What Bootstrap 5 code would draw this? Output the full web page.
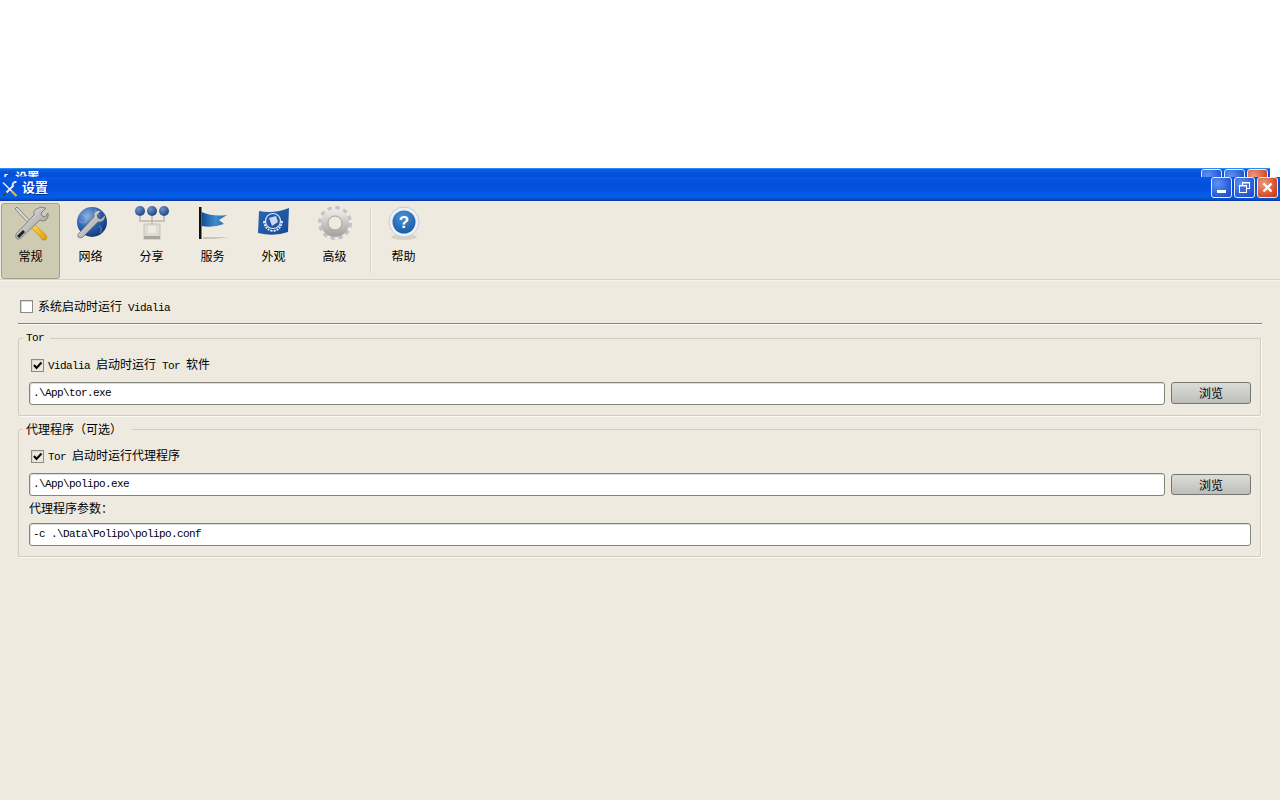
<!DOCTYPE html>
<html lang="zh-CN">
  <head>
    <meta charset="UTF-8" />
    <meta name="viewport" content="width=device-width, initial-scale=1" />
    <title>设置</title>
    <link href="https://cdn.jsdelivr.net/npm/bootstrap@5.3.3/dist/css/bootstrap.min.css" rel="stylesheet" />
    <style>
      html, body { height: 100%; overflow: hidden; }
      body {
        background: #fff;
        font-family: "Liberation Mono", "Noto Sans CJK SC", monospace;
        font-size: 10px;
        line-height: 14px;
        color: #000;
      }
      /* latin text in the shot is a 6px-per-char bitmap font */
      .lat { font-family: "Liberation Mono", monospace; font-size: 11px; letter-spacing: -.6px; }
      .cjk { font-family: "Noto Sans CJK SC", sans-serif; font-size: 12px; }
      .top-blank { height: 168px; }
      .title-back {
        height: 9px; width: 1270px; overflow: hidden; color: #fff; padding: 3px 0 0 2px;
        background: linear-gradient(#0f63e6, #0451dc 50%, #0350e0);
        border-top: 1px solid #2c8bf0;
      }
      .title-back .wbtns { margin-top: -3px; padding-right: 2px; }
      .title-back b { font-weight: 700; font-size: 12px; line-height: 14px; }
      .title-main {
        height: 24px; color: #fff; padding: 0 2px;
        background: linear-gradient(#0a58de 0, #0557e6 2px, #0450da 6px, #0351de 50%, #045eea 80%, #0a50c8 92%, #03359f 100%);
      }
      .title-main .ttl { font-size: 13px; font-weight: 700; margin-left: 4px; padding-bottom: 4px; text-shadow: 1px 1px 0 #0a2f9a; }
      .wbtn {
        width: 21px; height: 21px; border: 1px solid #e4ecfa; border-radius: 3px;
        background: radial-gradient(circle at 30% 30%, #5f92f2, #2c5fd8 60%, #1d46c0);
        margin-left: 2px;
      }
      .wbtn.wclose { background: radial-gradient(circle at 30% 30%, #ec9a80, #d8552f 60%, #bb3a1b); }
      .win-body { background: #eeeadf; height: 599px; }
      .tool-strip { height: 79px; border-bottom: 1px solid #d6d2c4; padding: 2px 0 0 1px; box-shadow: 0 1px 0 #f6f4ec; }
      .tool-item { width: 61px; height: 76px; text-align: center; padding-top: 3px; }
      .tool-item svg { display: block; margin: 0 auto; }
      .tool-item .tlabel { display: block; margin-top: 7px; line-height: 14px; }
      .tool-item.on { background: #cfcbb2; border: 1px solid #a5a18c; border-radius: 3px; width: 59px; padding-top: 2px; }
      .tool-sep { width: 1px; height: 66px; background: #d6d2c4; margin: 4px 2px 0 5px; box-shadow: 1px 0 0 #f8f6ee; }
      .pane { padding: 0 18px; }
      .start-row { height: 43px; padding: 20px 0 0 2px; }
      .start-row > span { margin-top: -1px; }
      .rule-line { height: 2px; border-top: 1px solid #85837a; border-bottom: 1px solid #fbfaf4; }
      .cb-box {
        width: 13px; height: 13px; background: #fff; border: 1px solid #8b8b84; flex: none;
        box-shadow: inset 1px 1px 0 #dcdad0; margin-right: 5px;
      }
      .cb-box.done { background: #ebe8dd; margin: 0 4px 0 2px; }
      .cb-box svg { display: block; }
      .grp { border: 1px solid #d0ccbf; border-radius: 2px; position: relative; margin-right: 1px; padding: 0 9px 0 10px; box-shadow: 1px 1px 0 #fbfaf4; }
      .grp-title { position: absolute; left: 4px; top: -8px; background: #eeeadf; padding: 0 6px 0 3px; line-height: 14px; }
      .grp-tor { margin-top: 13px; height: 78px; }
      .grp-proxy { margin-top: 13px; height: 128px; }
      .grp-proxy .grp-title { padding-right: 10px; }
      .cb-row { height: 18px; margin-top: 17px; }
      .path-field {
        height: 23px; background: #fff; border: 1px solid #85847c; border-radius: 3px;
        padding: 0 3px; line-height: 21px; box-shadow: inset 1px 1px 0 #ddd;
        flex: 1 1 auto;
      }
      .file-row { margin-top: 8px; gap: 6px; }
      .btn-browse {
        width: 80px; height: 22px; flex: none; padding: 0; border: 1px solid #77766e; border-radius: 3px;
        background: linear-gradient(#dcdcd8, #bdbdbb); color: #000; line-height: 18px;
      }
      .grp-proxy .btn-browse { margin-top: 1px; height: 21px; }
      .arg-label { margin-top: 5px; height: 22px; line-height: 14px; }
    </style>
  </head>
  <body>
    <svg width="0" height="0" class="d-block">
      <defs>
        <linearGradient id="gMetal" x1="0" y1="0" x2="1" y2="1"><stop offset="0" stop-color="#f4f4f4"/><stop offset="1" stop-color="#8a8a8a"/></linearGradient>
        <linearGradient id="gYellow" x1="0" y1="0" x2="1" y2="1"><stop offset="0" stop-color="#ffdc50"/><stop offset="1" stop-color="#d99a06"/></linearGradient>
        <radialGradient id="gGlobe" cx=".35" cy=".3" r=".8"><stop offset="0" stop-color="#8ab0e2"/><stop offset=".5" stop-color="#2f64b0"/><stop offset="1" stop-color="#102f6c"/></radialGradient>
        <radialGradient id="gBall" cx=".35" cy=".3" r=".8"><stop offset="0" stop-color="#6d92c8"/><stop offset="1" stop-color="#1a3f7f"/></radialGradient>
        <linearGradient id="gFlag" x1="0" y1="0" x2="1" y2="0"><stop offset="0" stop-color="#0f4d93"/><stop offset=".55" stop-color="#3f8ccd"/><stop offset="1" stop-color="#1c69ae"/></linearGradient>
        <linearGradient id="gUn" x1="0" y1="0" x2="1" y2="1"><stop offset="0" stop-color="#2a66b8"/><stop offset="1" stop-color="#174a93"/></linearGradient>
        <linearGradient id="gGear" x1="0" y1="0" x2="0" y2="1"><stop offset="0" stop-color="#e6e6e6"/><stop offset="1" stop-color="#a8a8a8"/></linearGradient>
        <radialGradient id="gHelp" cx=".45" cy=".3" r=".8"><stop offset="0" stop-color="#4d94d8"/><stop offset="1" stop-color="#10549e"/></radialGradient>
      </defs>
    </svg>

    <div class="top-blank"></div>

    <div class="title-back d-flex justify-content-between">
      <b><span class="lat">{</span> 设置</b>
      <div class="wbtns d-flex">
        <div class="wbtn"></div>
        <div class="wbtn"></div>
        <div class="wbtn wclose"></div>
      </div>
    </div>

    <div class="title-main d-flex align-items-center justify-content-between">
      <div class="d-flex align-items-center">
        <svg width="16" height="16" viewBox="0 0 32 32">
          <path d="M2 3 L20 21" stroke="#dfe6f2" stroke-width="3"/>
          <path d="M19 20 L29 30" stroke="#e0b840" stroke-width="4.5"/>
          <path d="M29 2 C24 1 20 5 22 10 L4 28" stroke="#e8e8e8" stroke-width="4" fill="none"/>
          <path d="M9 23 L3 29" stroke="#333" stroke-width="4"/>
        </svg>
        <span class="ttl cjk">设置</span>
      </div>
      <div class="d-flex align-self-start">
        <div class="wbtn d-flex align-items-end justify-content-center pb-1">
          <svg width="9" height="3"><rect width="9" height="3" fill="#fff"/></svg>
        </div>
        <div class="wbtn d-flex align-items-center justify-content-center">
          <svg width="11" height="11" viewBox="0 0 11 11" fill="none" stroke="#fff"><rect x="3.5" y=".5" width="7" height="6"/><rect x=".5" y="3.5" width="7" height="7" fill="#3a6ade"/><path d="M1 4h6M4 1h6"/></svg>
        </div>
        <div class="wbtn wclose d-flex align-items-center justify-content-center">
          <svg width="11" height="11" viewBox="0 0 11 11"><path d="M1.5 1.5 L9.5 9.5 M9.5 1.5 L1.5 9.5" stroke="#fff" stroke-width="2.4"/></svg>
        </div>
      </div>
    </div>

    <div class="win-body">
      <div class="tool-strip d-flex">
        <div class="tool-item on">
          <svg width="36" height="36" viewBox="0 0 36 36">
            <path d="M2 3 L4 1 L20 18 L18 20 Z" fill="#d8d8d4" stroke="#555" stroke-width=".6"/>
            <path d="M18 21 L21 18 L33 29 Q35 33 32 34 Q29 35 28 32 Z" fill="url(#gYellow)" stroke="#a87a05" stroke-width=".5"/>
            <path d="M33 2 L28 7 L29 10 L32 11 L35 7 Q36 13 31 15 Q28 15 27 14 L9 31 Q6 34 4 33 Q2 31 3 28 L21 9 Q20 5 23 3 Q27 0 33 2 Z" fill="url(#gMetal)" stroke="#555" stroke-width=".6"/>
            <path d="M11 25 L5 31" stroke="#222" stroke-width="3"/>
          </svg>
          <span class="tlabel cjk">常规</span>
        </div>
        <div class="tool-item">
          <svg width="36" height="36" viewBox="0 0 36 36">
            <circle cx="19" cy="16" r="15" fill="url(#gGlobe)"/>
            <path d="M9 8 Q15 10 13 16 Q9 18 6 15 M23 3 Q21 8 26 9 M26 20 Q30 22 27 27" stroke="#9dbce6" fill="none" opacity=".6"/>
            <path d="M28 5 L24 9 L25 12 L28 13 L32 9 Q33 14 28 16 L25 16 L10 31 Q7 33 5 31 Q4 29 6 27 L21 11 Q20 7 23 5 Q25 4 28 5 Z" fill="url(#gMetal)" stroke="#444" stroke-width=".5"/>
          </svg>
          <span class="tlabel cjk">网络</span>
        </div>
        <div class="tool-item">
          <svg width="36" height="36" viewBox="0 0 36 36">
            <path d="M6 10 V15 H30 V10 M18 10 V20" stroke="#b9b7ae" stroke-width="1.5" fill="none"/>
            <circle cx="6" cy="5" r="5" fill="url(#gBall)"/>
            <circle cx="18" cy="5" r="5" fill="url(#gBall)"/>
            <circle cx="30" cy="5" r="5" fill="url(#gBall)"/>
            <rect x="10" y="18" width="16" height="15" fill="#dedcd4" stroke="#c3c1b7"/>
            <rect x="10" y="30" width="16" height="3" fill="#a9a79d"/>
            <path d="M14 20 H22 V27 H14 Z" fill="#eceae3"/>
          </svg>
          <span class="tlabel cjk">分享</span>
        </div>
        <div class="tool-item">
          <svg width="36" height="36" viewBox="0 0 36 36">
            <path d="M8 31 H34 L20 33 H8 Z" fill="#c9c6ba"/>
            <rect x="4" y="1" width="2.5" height="32" fill="#111"/>
            <path d="M6.5 6 Q18 11 32 9 L24 14 L29 18 Q18 22 6.5 20 Z" fill="url(#gFlag)"/>
          </svg>
          <span class="tlabel cjk">服务</span>
        </div>
        <div class="tool-item">
          <svg width="36" height="36" viewBox="0 0 36 36">
            <path d="M3 5 Q18 8 33 2 L32 26 Q18 31 2 27 Z" fill="url(#gUn)"/>
            <circle cx="17" cy="15" r="7.5" fill="none" stroke="#dfe8f4" stroke-width="1.2"/>
            <path d="M13 12 L20 10 L22 16 L16 20 Z" fill="#c9d8ec"/>
            <path d="M8 15 Q9 24 17 25 Q25 24 26 15" fill="none" stroke="#e6edf6" stroke-width="2" stroke-dasharray="2 1"/>
          </svg>
          <span class="tlabel cjk">外观</span>
        </div>
        <div class="tool-item">
          <svg width="36" height="36" viewBox="0 0 36 36">
            <circle cx="18" cy="17" r="15" fill="none" stroke="#c2c2c0" stroke-width="4" stroke-dasharray="4.2 3.65"/>
            <circle cx="18" cy="17" r="10.5" fill="none" stroke="url(#gGear)" stroke-width="7"/>
            <circle cx="18" cy="17" r="7" fill="none" stroke="#a4a4a0" stroke-width="1"/>
          </svg>
          <span class="tlabel cjk">高级</span>
        </div>
        <div class="tool-sep"></div>
        <div class="tool-item">
          <svg width="36" height="36" viewBox="0 0 36 36">
            <ellipse cx="18" cy="31" rx="13" ry="3" fill="#d6d3c7"/>
            <circle cx="18" cy="16" r="15" fill="#eef1f4" stroke="#c5ccd4"/>
            <circle cx="18" cy="16" r="11.5" fill="url(#gHelp)"/>
            <text x="18" y="22" text-anchor="middle" font-family="Liberation Sans, sans-serif" font-weight="700" font-size="17" fill="#fff">?</text>
          </svg>
          <span class="tlabel cjk">帮助</span>
        </div>
      </div>

      <div class="pane">
        <div class="start-row d-flex align-items-start">
          <div class="cb-box"></div>
          <span><span class="cjk">系统启动时运行</span> <span class="lat">Vidalia</span></span>
        </div>
        <div class="rule-line"></div>

        <div class="grp grp-tor">
          <span class="grp-title lat">Tor</span>
          <div class="cb-row d-flex align-items-center">
            <div class="cb-box done">
              <svg width="11" height="11" viewBox="0 0 11 11"><path d="M2 5 L4.5 8 L9.5 2.5" stroke="#000" stroke-width="2" fill="none"/></svg>
            </div>
            <span><span class="lat">Vidalia</span> <span class="cjk">启动时运行</span> <span class="lat">Tor</span> <span class="cjk">软件</span></span>
          </div>
          <div class="file-row d-flex">
            <div class="path-field lat">.\App\tor.exe</div>
            <button type="button" class="btn-browse cjk">浏览</button>
          </div>
        </div>

        <div class="grp grp-proxy">
          <span class="grp-title cjk">代理程序（可选）</span>
          <div class="cb-row d-flex align-items-center">
            <div class="cb-box done">
              <svg width="11" height="11" viewBox="0 0 11 11"><path d="M2 5 L4.5 8 L9.5 2.5" stroke="#000" stroke-width="2" fill="none"/></svg>
            </div>
            <span><span class="lat">Tor</span> <span class="cjk">启动时运行代理程序</span></span>
          </div>
          <div class="file-row d-flex">
            <div class="path-field lat">.\App\polipo.exe</div>
            <button type="button" class="btn-browse cjk">浏览</button>
          </div>
          <div class="arg-label cjk">代理程序参数：</div>
          <div class="d-flex">
            <div class="path-field lat">-c .\Data\Polipo\polipo.conf</div>
          </div>
        </div>
      </div>
    </div>

    <script src="https://cdn.jsdelivr.net/npm/bootstrap@5.3.3/dist/js/bootstrap.bundle.min.js"></script>
  </body>
</html>
